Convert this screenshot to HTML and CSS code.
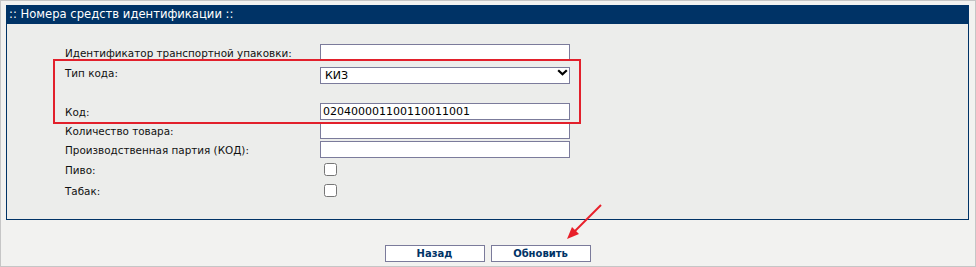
FILE: index.html
```html
<!DOCTYPE html>
<html lang="ru">
<head>
<meta charset="utf-8">
<title>Номера средств идентификации</title>
<link rel="stylesheet" href="styles.css">
</head>
<body>
<div class="page">
  <div class="panel">
    <div class="panel-head">:: Номера средств идентификации ::</div>
    <div class="panel-body">
      <div class="form">
        <label class="lbl">Идентификатор транспортной упаковки:</label>
        <div class="fld"><input class="txt" type="text"></div>

        <label class="lbl">Тип кода:</label>
        <div class="fld"><span class="sel-wrap"><select class="sel"><option>КИЗ</option></select><svg class="chev" width="11" height="7" viewBox="0 0 11 7"><path d="M1.2 1.2 L5.5 5.3 L9.8 1.2" fill="none" stroke="#000" stroke-width="2.2"/></svg></span></div>

        <div class="lbl"></div>
        <div class="fld"></div>

        <label class="lbl">Код:</label>
        <div class="fld"><input class="txt" type="text" value="020400001100110011001"></div>

        <label class="lbl">Количество товара:</label>
        <div class="fld"><input class="txt" type="text"></div>

        <label class="lbl">Производственная партия (КОД):</label>
        <div class="fld"><input class="txt" type="text"></div>

        <label class="lbl">Пиво:</label>
        <div class="fld"><input class="chk" type="checkbox"></div>

        <label class="lbl">Табак:</label>
        <div class="fld"><input class="chk" type="checkbox"></div>
      </div>
    </div>
  </div>
  <div class="actions">
    <button class="btn">Назад</button>
    <button class="btn">Обновить</button>
  </div>
  <div class="mark"></div>
  <svg class="arrow" width="50" height="45" viewBox="0 0 50 45">
    <line x1="41" y1="5" x2="15" y2="31" stroke="#e8202a" stroke-width="2"/>
    <polygon points="7,39 19,34 12,27" fill="#e8202a"/>
  </svg>
</div>
</body>
</html>
```

FILE: styles.css
```css
html, body {
  margin: 0;
  padding: 0;
  background: #f2f2f0;
}

.page {
  position: relative;
  box-sizing: border-box;
  width: 976px;
  height: 267px;
  border: 1px solid #c6c6c6;
  background: #f2f2f0;
  padding: 4px 6px 0 5px;
  font-family: "DejaVu Sans", Verdana, sans-serif;
}

.panel {
  box-sizing: border-box;
  height: 215px;
  border: 1px solid #003366;
  background: #ecedeb;
}

.panel-head {
  height: 18px;
  line-height: 17px;
  background: #003366;
  color: #ffffff;
  font-size: 11.6px;
  padding-left: 2px;
}

.panel-body {
  padding: 18px 0 0 58px;
}

.form {
  display: grid;
  grid-template-columns: 255px 250px;
  grid-template-rows: 20px 20px 19px 20px 19px 19px 21px 21px;
  align-items: center;
}

.lbl {
  font-size: 10.4px;
  color: #111111;
  padding-top: 1px;
}

.fld {
  display: flex;
  align-items: center;
}

.txt {
  box-sizing: border-box;
  width: 250px;
  height: 17px;
  margin: 0;
  border: 1px solid #7b7b9b;
  background: #ffffff;
  padding: 0 2px;
  font-family: "DejaVu Sans", Verdana, sans-serif;
  font-size: 11px;
  color: #000;
  outline: none;
}

.sel-wrap {
  position: relative;
  display: block;
  width: 250px;
  height: 17px;
}

.sel {
  appearance: none;
  -webkit-appearance: none;
  box-sizing: border-box;
  width: 250px;
  height: 17px;
  margin: 0;
  border: 1px solid #7b7b9b;
  border-radius: 0;
  background: #ffffff;
  padding: 0 0 0 4px;
  font-family: "DejaVu Sans", Verdana, sans-serif;
  font-size: 11px;
  color: #000;
}

.chev {
  position: absolute;
  right: 2px;
  top: 5px;
}

.chk {
  width: 13px;
  height: 13px;
  margin: 0 0 0 4px;
}

.actions {
  display: flex;
  justify-content: center;
  gap: 6px;
  margin-top: 25px;
}

.btn {
  box-sizing: border-box;
  width: 100px;
  height: 17px;
  padding: 0;
  border: 1px solid #7b7b9b;
  border-radius: 0;
  background: #ffffff;
  color: #003366;
  font-family: "DejaVu Sans", Verdana, sans-serif;
  font-size: 10px;
  font-weight: bold;
}

.mark {
  position: absolute;
  left: 52px;
  top: 58px;
  box-sizing: border-box;
  width: 528px;
  height: 65px;
  border: 2px solid #e2202b;
}

.arrow {
  position: absolute;
  left: 559px;
  top: 199px;
}
```
